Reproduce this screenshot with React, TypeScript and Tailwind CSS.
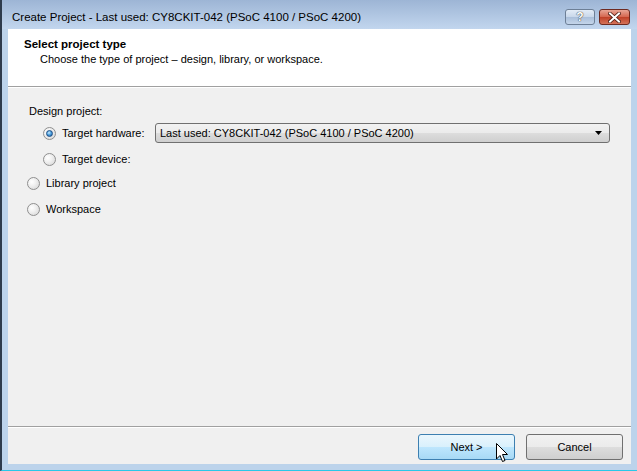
import React from "react";

function Radio({ checked }: { checked?: boolean }) {
  return (
    <span className="relative inline-flex h-[13px] w-[13px] shrink-0 items-center justify-center rounded-full border border-[#8f8f8f] bg-[radial-gradient(circle_at_35%_35%,#ffffff_0%,#f0f0f0_40%,#d2d2d2_100%)]">
      {checked && (
        <span className="h-[7px] w-[7px] rounded-full border border-[#1d4e85] bg-[radial-gradient(circle_at_40%_35%,#cfeeff_0%,#4fa3e0_45%,#1a5aa0_100%)]" />
      )}
    </span>
  );
}

export default function App() {
  const font = { fontFamily: '"Liberation Sans", Arial, sans-serif' };
  return (
    <div
      className="relative flex h-[471px] w-[637px] flex-col overflow-hidden border-b border-b-[#29c8e8] border-l-2 border-l-[#2e3b4c] bg-[#bcd3eb] text-[11px] text-black"
      style={font}
    >
      {/* Title bar */}
      <div className="flex h-[29px] shrink-0 items-start bg-[linear-gradient(to_bottom,#9db5d5,#c2d6ee)] pl-[10px] pr-[7px]">
        <div className="mt-[10px] flex-1 text-[11.5px] leading-[14px] text-black">
          Create Project - Last used: CY8CKIT-042 (PSoC 4100 / PSoC 4200)
        </div>
        <div className="mt-[9px] flex gap-[4px]">
          <div className="flex h-[16px] w-[30px] items-center justify-center rounded-[3px] border border-[#6d7f96] bg-[linear-gradient(to_bottom,#e3ecf7,#c8d7ea_50%,#aabfda_51%,#c4d5ea)] text-[12px] font-bold leading-none text-white [text-shadow:0_0_1px_#333,0_0_1px_#333]">
            ?
          </div>
          <div className="flex h-[16px] w-[31px] items-center justify-center rounded-[3px] border border-[#6e2a20] bg-[linear-gradient(to_bottom,#e8a595,#d4654e_50%,#bf3f26_51%,#d4735a)]">
            <svg width="13" height="11" viewBox="0 0 13 11">
              <path d="M2 1.5 L11 9.5 M11 1.5 L2 9.5" stroke="#4a1a12" strokeWidth="3.6" strokeLinecap="square" />
              <path d="M2 1.5 L11 9.5 M11 1.5 L2 9.5" stroke="#ffffff" strokeWidth="2" strokeLinecap="square" />
            </svg>
          </div>
        </div>
      </div>

      {/* Body with frame */}
      <div className="flex flex-1 pb-[6px] pl-[6px] pr-[6px]">
        <div className="flex flex-1 flex-col bg-[#f0f0f0]">
          {/* Header */}
          <div className="h-[57px] shrink-0 bg-white pl-[16px] pt-[8px]">
            <div className="text-[11.5px] font-bold leading-[14px]">Select project type</div>
            <div className="mt-[1px] pl-[16px] leading-[14px]">
              Choose the type of project – design, library, or workspace.
            </div>
          </div>
          <div className="h-px shrink-0 bg-[#a0a0a0]" />
          <div className="h-px shrink-0 bg-white" />

          {/* Content */}
          <div className="flex flex-1 flex-col pl-[19px] pt-[16px] leading-[14px]">
            <div className="ml-[2px] text-black">Design project:</div>
            <div className="mt-[5px] flex items-center pl-[16px]">
              <Radio checked />
              <span className="ml-[6px] w-[93px]">Target hardware:</span>
              <div className="flex h-[20px] w-[455px] items-center rounded-[3px] border border-[#707070] bg-[linear-gradient(to_bottom,#f2f2f2,#ebebeb_50%,#dddddd_51%,#cfcfcf)] pl-[4px] pr-[6px]">
                <span className="flex-1">Last used: CY8CKIT-042 (PSoC 4100 / PSoC 4200)</span>
                <svg width="8" height="4" viewBox="0 0 8 4">
                  <path d="M0 0 H7 L3.5 4 Z" fill="#000" />
                </svg>
              </div>
            </div>
            <div className="mt-[9px] flex items-center pl-[16px]">
              <Radio />
              <span className="ml-[6px]">Target device:</span>
            </div>
            <div className="mt-[10px] flex items-center">
              <Radio />
              <span className="ml-[6px]">Library project</span>
            </div>
            <div className="mt-[12px] flex items-center">
              <Radio />
              <span className="ml-[6px]">Workspace</span>
            </div>
          </div>

          {/* Bottom separator */}
          <div className="h-px shrink-0 bg-[#a0a0a0]" />
          <div className="h-px shrink-0 bg-white" />
          <div className="flex h-[36px] shrink-0 items-start justify-end gap-[11px] pr-[8px] pt-[6px]">
            <div className="relative flex h-[26px] w-[97px] items-center justify-center rounded-[3px] border border-[#3c7fb1] bg-[linear-gradient(to_bottom,#eaf6fd,#d9f0fc_50%,#bee6fd_51%,#a7d9f5)]">
              Next &gt;
              <svg className="absolute left-[77px] top-[8px]" width="13" height="20" viewBox="0 0 13 20">
                <path d="M0.5 0.5 V16 L4 12.5 L6.5 18.5 L9 17.5 L6.5 11.5 H11.5 Z" fill="#fff" stroke="#000" strokeWidth="1" strokeLinejoin="miter" />
              </svg>
            </div>
            <div className="flex h-[26px] w-[97px] items-center justify-center rounded-[3px] border border-[#707070] bg-[linear-gradient(to_bottom,#f2f2f2,#ebebeb_50%,#dddddd_51%,#cfcfcf)]">
              Cancel
            </div>
          </div>
        </div>
      </div>
    </div>
  );
}
